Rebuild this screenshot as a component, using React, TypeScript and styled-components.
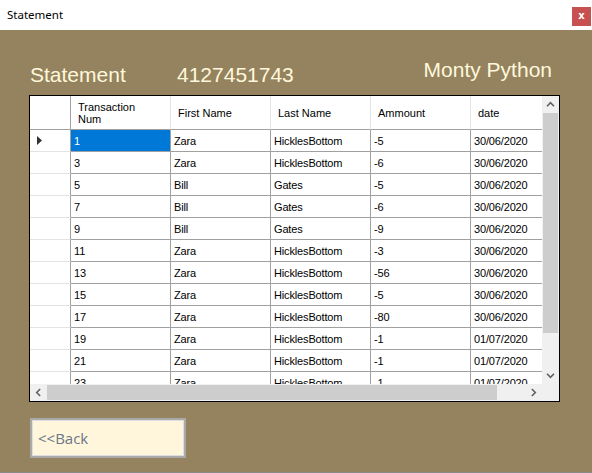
import React from 'react';
import styled, { createGlobalStyle } from 'styled-components';

const Global = createGlobalStyle`
  html, body { margin: 0; padding: 0; }
  body { width: 592px; height: 473px; overflow: hidden; background: #ffffff; }
`;

const Window = styled.div`
  width: 592px;
  height: 473px;
  display: flex;
  flex-direction: column;
  box-sizing: border-box;
`;

const TitleBar = styled.div`
  height: 30px;
  flex: none;
  background: #ffffff;
  display: flex;
  align-items: flex-start;
  justify-content: space-between;
  padding: 0 1px 0 7px;
  box-sizing: border-box;
`;

const TitleText = styled.span`
  font-family: "Noto Sans", "Liberation Sans", sans-serif;
  font-size: 11.5px;
  color: #000000;
  line-height: 16px;
  margin-top: 7px;
`;

const CloseButton = styled.div`
  width: 19px;
  height: 19px;
  margin-top: 7px;
  background: #c75050;
  color: #ffffff;
  font-family: "DejaVu Sans", sans-serif;
  font-weight: bold;
  font-size: 10px;
  line-height: 18px;
  text-align: center;
`;

const Body = styled.div`
  flex: 1;
  background: #94835e;
  padding: 28px 32px 0 29px;
  box-sizing: border-box;
  border-bottom: 1px solid #8a8a8a;
  display: flex;
  flex-direction: column;
`;

const LabelRow = styled.div`
  display: flex;
  align-items: flex-start;
  padding-left: 1px;
  height: 29px;
`;

const BigLabel = styled.span<{ $width?: number; $top?: number; $right?: boolean }>`
  font-family: "Liberation Sans", Arial, sans-serif;
  font-size: 21px;
  line-height: 24px;
  color: #fff8dc;
  width: ${(p) => (p.$width ? `${p.$width}px` : 'auto')};
  margin-top: ${(p) => p.$top ?? 0}px;
  margin-left: ${(p) => (p.$right ? 'auto' : '0')};
  margin-right: ${(p) => (p.$right ? '8px' : '0')};
`;

const GridFrame = styled.div`
  margin-top: 8px;
  width: 531px;
  height: 307px;
  box-sizing: border-box;
  border: 1px solid #000000;
  background: #ffffff;
  display: grid;
  grid-template-columns: 1fr 17px;
  grid-template-rows: 1fr 17px;
`;

const Viewport = styled.div`
  overflow: hidden;
  background: #ffffff;
`;

const Row = styled.div<{ $header?: boolean }>`
  display: flex;
  height: ${(p) => (p.$header ? 34 : 22)}px;
  width: max-content;
`;

const RowHead = styled.div<{ $header?: boolean }>`
  width: 41px;
  flex: none;
  box-sizing: border-box;
  border-right: 1px solid #a0a0a0;
  border-bottom: 1px solid ${(p) => (p.$header ? '#a0a0a0' : '#e3e3e3')};
  display: flex;
  align-items: center;
  padding-left: 7px;
`;

const HeadCell = styled.div`
  width: 100px;
  flex: none;
  box-sizing: border-box;
  border-right: 1px solid #e3e3e3;
  border-bottom: 1px solid #a0a0a0;
  display: flex;
  align-items: center;
  padding-left: 7px;
  font-family: "Liberation Sans", Arial, sans-serif;
  font-size: 11px;
  line-height: 12px;
  color: #000000;
  white-space: pre-line;
`;

const Cell = styled.div<{ $selected?: boolean }>`
  width: 100px;
  flex: none;
  box-sizing: border-box;
  border-right: 1px solid #a0a0a0;
  border-bottom: 1px solid #a0a0a0;
  display: flex;
  align-items: center;
  padding-left: 3px;
  font-family: "Liberation Sans", Arial, sans-serif;
  font-size: 11px;
  letter-spacing: -0.15px;
  color: ${(p) => (p.$selected ? '#ffffff' : '#000000')};
  background: ${(p) => (p.$selected ? '#0078d7' : '#ffffff')};
  white-space: nowrap;
  overflow: hidden;
`;

const VScroll = styled.div`
  background: #f0f0f0;
  display: flex;
  flex-direction: column;
`;

const HScroll = styled.div`
  background: #f0f0f0;
  display: flex;
`;

const Corner = styled.div`
  background: #f0f0f0;
`;

const ArrowBtn = styled.div`
  width: 17px;
  height: 17px;
  flex: none;
  display: flex;
  align-items: center;
  justify-content: center;
`;

const VThumb = styled.div<{ $len: number }>`
  height: ${(p) => p.$len}px;
  margin: 0 1px;
  background: #cdcdcd;
`;

const HThumb = styled.div<{ $len: number }>`
  width: ${(p) => p.$len}px;
  margin: 1px 0;
  background: #cdcdcd;
`;

const Spacer = styled.div`
  flex: 1;
`;

const BackButton = styled.div`
  margin-top: 16px;
  width: 156px;
  height: 40px;
  box-sizing: border-box;
  border: 2px solid #a9a9a9;
  box-shadow: inset 0 0 0 1px #dedede;
  background: #fff6dc;
  display: flex;
  align-items: center;
  padding-left: 6px;
  font-family: "Open Sans", "Noto Sans", sans-serif;
  font-size: 15px;
  color: #6a7788;
  margin-left: 1px;
`;

const Chevron = ({ dir }: { dir: 'up' | 'down' | 'left' | 'right' }) => {
  const rot = { up: 0, right: 90, down: 180, left: 270 }[dir];
  return (
    <svg width="9" height="9" viewBox="0 0 9 9" style={{ transform: `rotate(${rot}deg)` }}>
      <path d="M1 6.2 L4.5 2.7 L8 6.2" fill="none" stroke="#606060" strokeWidth="1.6" />
    </svg>
  );
};

const RowMarker = () => (
  <svg width="6" height="9" viewBox="0 0 6 9">
    <path d="M0 0 L5 4.5 L0 9 Z" fill="#333333" />
  </svg>
);

type Tx = [string, string, string, string, string];

const data: Tx[] = [
  ['1', 'Zara', 'HicklesBottom', '-5', '30/06/2020'],
  ['3', 'Zara', 'HicklesBottom', '-6', '30/06/2020'],
  ['5', 'Bill', 'Gates', '-5', '30/06/2020'],
  ['7', 'Bill', 'Gates', '-6', '30/06/2020'],
  ['9', 'Bill', 'Gates', '-9', '30/06/2020'],
  ['11', 'Zara', 'HicklesBottom', '-3', '30/06/2020'],
  ['13', 'Zara', 'HicklesBottom', '-56', '30/06/2020'],
  ['15', 'Zara', 'HicklesBottom', '-5', '30/06/2020'],
  ['17', 'Zara', 'HicklesBottom', '-80', '30/06/2020'],
  ['19', 'Zara', 'HicklesBottom', '-1', '01/07/2020'],
  ['21', 'Zara', 'HicklesBottom', '-1', '01/07/2020'],
  ['23', 'Zara', 'HicklesBottom', '-1', '01/07/2020'],
];

const headers = ['Transaction\nNum', 'First Name', 'Last Name', 'Ammount', 'date'];

export default function App() {
  return (
    <>
      <Global />
      <Window>
        <TitleBar>
          <TitleText>Statement</TitleText>
          <CloseButton>x</CloseButton>
        </TitleBar>
        <Body>
          <LabelRow>
            <BigLabel $width={147} $top={5}>Statement</BigLabel>
            <BigLabel $top={5}>4127451743</BigLabel>
            <BigLabel $right>Monty Python</BigLabel>
          </LabelRow>
          <GridFrame>
            <Viewport>
              <Row $header>
                <RowHead $header />
                {headers.map((h) => (
                  <HeadCell key={h}>{h}</HeadCell>
                ))}
              </Row>
              {data.map((r, i) => (
                <Row key={r[0]}>
                  <RowHead>{i === 0 ? <RowMarker /> : null}</RowHead>
                  {r.map((v, j) => (
                    <Cell key={j} $selected={i === 0 && j === 0}>
                      {v}
                    </Cell>
                  ))}
                </Row>
              ))}
            </Viewport>
            <VScroll>
              <ArrowBtn>
                <Chevron dir="up" />
              </ArrowBtn>
              <VThumb $len={220} />
              <Spacer />
              <ArrowBtn>
                <Chevron dir="down" />
              </ArrowBtn>
            </VScroll>
            <HScroll>
              <ArrowBtn>
                <Chevron dir="left" />
              </ArrowBtn>
              <HThumb $len={450} />
              <Spacer />
              <ArrowBtn>
                <Chevron dir="right" />
              </ArrowBtn>
            </HScroll>
            <Corner />
          </GridFrame>
          <BackButton>&lt;&lt;Back</BackButton>
        </Body>
      </Window>
    </>
  );
}
